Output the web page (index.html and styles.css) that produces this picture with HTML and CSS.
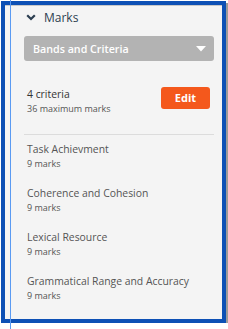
FILE: index.html
```html
<!DOCTYPE html>
<html lang="en">
<head>
    <meta charset="UTF-8">
    <meta name="viewport" content="width=device-width, initial-scale=1.0">
    <title>Marks</title>
    <link rel="stylesheet" href="styles.css">
</head>
<body>
    <div class="guide"></div> <!-- thin focus guide line -->
    <div class="panel">
        <div class="header">
            <svg class="chevron" width="10" height="7" viewBox="0 0 10 7">
                <path d="M1.2 1.2 L5 5 L8.8 1.2" fill="none" stroke="#2c3e50" stroke-width="2.2"/>
            </svg>
            <span class="title">Marks</span>
        </div>
        <div class="select">
            <span>Bands and Criteria</span>
            <svg width="10" height="6" viewBox="0 0 10 6"><path d="M0 0 L10 0 L5 5.5 Z" fill="#fff"/></svg>
        </div>
        <div class="summary">
            <div>
                <div class="count">4 criteria</div>
                <div class="sub">36 maximum marks</div>
            </div>
            <div class="edit">Edit</div>
        </div>
        <div class="divider"></div>
        <div class="criteria">
            <div class="item">
                <div class="name">Task Achievment</div>
                <div class="sub">9 marks</div>
            </div>
            <div class="item">
                <div class="name">Coherence and Cohesion</div>
                <div class="sub">9 marks</div>
            </div>
            <div class="item">
                <div class="name">Lexical Resource</div>
                <div class="sub">9 marks</div>
            </div>
            <div class="item">
                <div class="name">Grammatical Range and Accuracy</div>
                <div class="sub">9 marks</div>
            </div>
        </div>
    </div>
</body>
</html>
```

FILE: styles.css
```css
body {
    margin: 0;
    padding: 0;
    background: #ffffff;
    font-family: "Open Sans", Arial, sans-serif;
    color: #444;
}
.guide {
    position: absolute;
    left: 10px;
    top: 0;
    width: 1px;
    height: 329px;
    background: #5a9af2;
    z-index: 2;
}
.panel {
    box-sizing: border-box;
    margin: 1px 0 0 1px;
    width: 225px;
    height: 322px;
    border: 4px solid #0d50b5;
    background: #f4f4f4;
    box-shadow: 2px 2px 0 #9a9a9a, inset 0 1px 0 #c8c8c8;
    padding: 4px 8px 0 19px;
}
.header {
    display: flex;
    align-items: center;
    height: 16px;
    padding-left: 2px;
}
.chevron {
    margin-right: 8px;
}
.title {
    font-size: 12px;
    color: #2c3e50;
}
.select {
    display: flex;
    justify-content: space-between;
    align-items: center;
    height: 25px;
    margin-top: 11px;
    padding: 0 8px 0 9px;
    background: #b3b3b3;
    border-radius: 3px;
    color: #fff;
    font-size: 10.7px;
    font-weight: 600;
}
.summary {
    display: flex;
    justify-content: space-between;
    align-items: flex-start;
    margin-top: 26px;
    padding: 0 4px 0 3px;
}
.count {
    font-size: 10.4px;
    line-height: 15px;
    color: #333;
}
.sub {
    font-size: 9px;
    line-height: 13px;
    color: #555;
}
.edit {
    width: 49px;
    height: 22px;
    line-height: 22px;
    text-align: center;
    background: #f4581c;
    border-radius: 3px;
    color: #fff;
    font-size: 11px;
    font-weight: 700;
}
.divider {
    height: 1px;
    background: #dcdcdc;
    margin-top: 19px;
}
.criteria {
    display: flex;
    flex-direction: column;
    gap: 16px;
    margin-top: 7px;
    padding-left: 3px;
}
.name {
    font-size: 10.4px;
    line-height: 15px;
    color: #555;
}
```
